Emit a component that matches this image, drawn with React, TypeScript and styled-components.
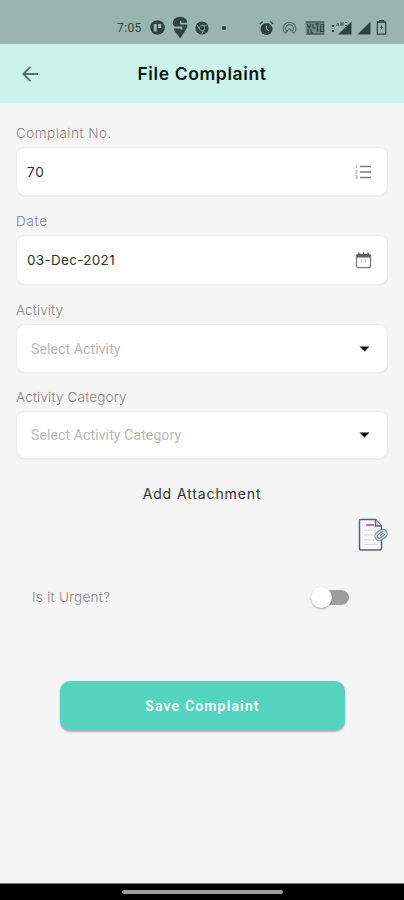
import React, { useState } from "react";
import styled, { createGlobalStyle } from "styled-components";

const GlobalStyle = createGlobalStyle`
  * { box-sizing: border-box; }
  body { margin: 0; background: #f5f5f5; }
  button { border: 0; padding: 0; background: none; font: inherit; color: inherit; }
`;

const Screen = styled.div`
  display: flex;
  flex-direction: column;
  width: 404px;
  height: 900px;
  overflow: hidden;
  background: #f5f5f5;
  font-family: Inter, "Open Sans", sans-serif;
`;

const StatusBar = styled.div`
  display: flex;
  align-items: center;
  flex: none;
  height: 44px;
  padding: 11px 17px 0 117px;
  background: #98b5ae;
  color: #30443f;
  svg { display: block; flex: none; }
`;

const Clock = styled.span`
  width: 33px;
  font: 400 12px/16px Roboto, sans-serif;
  letter-spacing: 0.4px;
`;

const StatusIcons = styled.div<{ $gap: number }>`
  display: flex;
  align-items: center;
  gap: ${(p) => p.$gap}px;
`;

const Spacer = styled.div`
  flex: 1;
`;

const Header = styled.header`
  display: grid;
  grid-template-columns: 60px 1fr 60px;
  align-items: center;
  flex: none;
  height: 59px;
  background: #cbf3e9;
`;

const BackButton = styled.button`
  display: flex;
  justify-content: center;
  height: 18px;
`;

const Title = styled.h1`
  margin: 0;
  font-size: 17.5px;
  line-height: 22px;
  font-weight: 600;
  letter-spacing: 0.62px;
  text-align: center;
  color: #0c1715;
  white-space: nowrap;
`;

const Form = styled.main`
  display: flex;
  flex-direction: column;
  flex: 1;
  padding: 20px 16px 0;
`;

const Field = styled.div<{ $height: number; $gap: number }>`
  display: flex;
  flex-direction: column;
  flex: none;
  height: ${(p) => p.$height}px;
  margin-bottom: ${(p) => p.$gap}px;
`;

const Label = styled.label<{ $spacing: number }>`
  height: 24px;
  font-size: 13.5px;
  line-height: 20px;
  font-weight: 300;
  letter-spacing: ${(p) => p.$spacing}px;
  color: #858585;
`;

const Box = styled.div<{ $inset: number }>`
  display: flex;
  align-items: center;
  justify-content: space-between;
  flex: 1;
  padding: 0 15px 0 ${(p) => p.$inset}px;
  border: 1px solid #ececec;
  border-radius: 9px;
  background: #fff;
  box-shadow: 0 1px 1px #ededed;
`;

const Value = styled.span<{ $spacing: number }>`
  font-size: 13.5px;
  line-height: 18px;
  letter-spacing: ${(p) => p.$spacing}px;
  color: #303030;
`;

const Placeholder = styled.span`
  font: 400 14px/18px Roboto, sans-serif;
  letter-spacing: 0.12px;
  color: #b9b9b9;
`;

const AttachmentTitle = styled.h2`
  margin: 0;
  font-size: 14px;
  line-height: 20px;
  font-weight: 400;
  letter-spacing: 0.88px;
  text-align: center;
  color: #303030;
`;

const AttachmentButton = styled.button`
  align-self: flex-end;
  width: 30px;
  height: 34px;
  margin-top: 14px;
  svg { display: block; }
`;

const UrgentRow = styled.div`
  display: flex;
  align-items: center;
  justify-content: space-between;
  height: 24px;
  margin-top: 33px;
  padding: 0 38px 0 16px;
`;

const UrgentLabel = styled.span`
  font-size: 13.5px;
  font-weight: 300;
  letter-spacing: 0.28px;
  color: #858585;
`;

const Toggle = styled.button<{ $on: boolean }>`
  display: flex;
  align-items: center;
  justify-content: ${(p) => (p.$on ? "flex-end" : "flex-start")};
  width: 34px;
  height: 15px;
  margin-right: 1px;
  border-radius: 8px;
  background: ${(p) => (p.$on ? "#9adfd0" : "#9e9e9e")};
`;

const Thumb = styled.span`
  width: 21px;
  height: 21px;
  flex: none;
  margin-left: -4px;
  border-radius: 50%;
  background: #fff;
  box-shadow: 0 1px 2px rgba(0, 0, 0, 0.35);
`;

const SaveButton = styled.button`
  height: 49px;
  width: 285px;
  margin: 72px 0 0 44px;
  border-radius: 10px;
  background: #54d3be;
  box-shadow: 0 2px 2px rgba(60, 75, 85, 0.42);
  color: #f3fffc;
  font: 600 14px/20px Roboto, sans-serif;
  letter-spacing: 1.15px;
`;

const NavigationBar = styled.footer`
  display: flex;
  align-items: center;
  justify-content: center;
  flex: none;
  height: 17px;
  border-top: 1px solid #777;
  background: #000;
`;

const NavigationHandle = styled.div`
  width: 161px;
  height: 4px;
  border-radius: 2px;
  background: #9b9b9b;
`;

const TrelloIcon = () => (
  <svg width="15" height="15" viewBox="0 0 15 15">
    <circle cx="7.5" cy="7.5" r="7.3" fill="#30443f" />
    <rect x="3.8" y="4" width="3" height="7.4" rx=".6" fill="#98b5ae" />
    <rect x="8" y="4" width="3.3" height="4" rx=".6" fill="#98b5ae" />
  </svg>
);

const SwiggyIcon = () => (
  <svg width="16" height="23" viewBox="0 0 16 23">
    <path d="M8 22.500C6 19 3.700 16.500 2 14c-.5-1 .2-1.600 1.200-1.600h5v1h2.200v-2c0-.6-.4-.9-1-.9H3C.9 9.800.2 7.600 1 5.400 2 2.300 4.700.8 8 .8c4.200 0 7 2.500 7.300 6H9.200V4.800H8v2.800c0 .6.3.9 1 .9h5.700c.7 0 .9.400.7 1.200C14.400 14 11 18 8 22.500Z" fill="#30443f" />
  </svg>
);

const ChromeIcon = () => (
  <svg width="14" height="14" viewBox="0 0 14 14">
    <circle cx="7" cy="7" r="6.6" fill="#30443f" />
    <g fill="none" stroke="#7f9a94" strokeWidth="1">
      <circle cx="7" cy="7" r="2.7" />
      <path d="M7 4.300h5.300M4.600 8.400 2 3.900M9.400 8.400l-2.700 4.500" />
    </g>
  </svg>
);

const AlarmIcon = () => (
  <svg width="15" height="16" viewBox="0 0 15 16">
    <circle cx="7.5" cy="9" r="6" fill="#30443f" />
    <path d="m.8 4 3-2.600M14.200 4l-3-2.600" stroke="#30443f" strokeWidth="1.3" />
    <path d="M7.500 5.800V9.200l2.300 1.400" fill="none" stroke="#98b5ae" strokeWidth="1" />
  </svg>
);

const HotspotIcon = () => (
  <svg width="15" height="14" viewBox="0 0 15 14" fill="none" stroke="#506963" strokeWidth="1.1">
    <path d="M3.300 12.300a6.300 6.300 0 1 1 8.400 0M4.800 10.300a3.900 3.900 0 1 1 5.400 0" />
    <path d="m7.500 7.500-4.200 4.800M7.500 7.500l4.200 4.800" />
  </svg>
);

const VolteIcon = () => (
  <svg width="20" height="14" viewBox="0 0 20 14">
    <path d="M.5.500h19v13H.5z" fill="#6f8983" />
    <path d="M1 1h18M1 13h18M2 3l2 4 2-4M8 3v4h3M3 8v4M6 8v4h2M10 3h4M12.500 3v8M15.500 3.500h3v7h-3v-7" fill="none" stroke="#30443f" strokeWidth="1.2" />
  </svg>
);

const SignalIcon = ({ network = false }: { network?: boolean }) => (
  <svg width={network ? 21 : 14} height="14" viewBox={network ? "0 0 21 14" : "0 0 14 14"}>
    <path d={network ? "M20.500.500v13H7Z" : "M13.500.500v13H.5Z"} fill="#30443f" />
    {network && (
      <g fill="none" stroke="#30443f">
        <path d="M1 5h2M1 10h2" strokeWidth="2" />
        <path d="m5.500 5 1.500-3 1 3M10 1v4M10 3h2M12 1v4M14 1.500h2M14 4.500h2" strokeWidth=".8" />
      </g>
    )}
  </svg>
);

const BatteryIcon = () => (
  <svg width="11" height="15" viewBox="0 0 11 15">
    <path d="M3.600 1.800V.7h3.800v1.100h2.300v12.300H1.300V1.800Z" fill="none" stroke="#30443f" strokeWidth="1.2" />
    <path d="M2 2h7" stroke="#30443f" strokeWidth="1.5" />
    <path d="M5.500 5.500v4M4.500 7.500h2" stroke="#30443f" strokeWidth="1.1" />
  </svg>
);

const BackIcon = () => (
  <svg width="18" height="18" viewBox="0 0 18 18" fill="none" stroke="#527269" strokeWidth="1.9">
    <path d="M17 9H2.500M9.500 1.800 2.300 9l7.200 7.200" />
  </svg>
);

const NumberListIcon = () => (
  <svg width="17" height="16" viewBox="0 0 17 16" fill="none">
    <path d="M5 2.500h11M5 8h11M5 13.500h11" stroke="#7d7d7d" strokeWidth="1.4" />
    <path d="M.7 1.500h1v3M.5 6.700h1.800L.6 9.200h1.800M.5 11.700h1.700v2.900H.5M1 13.100h1.200" stroke="#a5a5a5" strokeWidth=".8" />
  </svg>
);

const CalendarIcon = () => (
  <svg width="17" height="18" viewBox="0 0 17 18" fill="none">
    <rect x="1.500" y="3.500" width="14" height="13.200" rx="2" stroke="#7d7d7d" strokeWidth="1.3" />
    <path d="M1.500 6V4.500q0-1.500 1.500-1.500h11Q15.500 3 15.500 4.500v2h-14Z" fill="#606060" />
    <path d="M4 1.500v3M8.500 1.500v3M13 1.500v3" stroke="#606060" strokeWidth="1.3" />
    <path d="M6.500 8.500v3M10.500 8.500v3" stroke="#c9c9c9" strokeWidth="1" />
  </svg>
);

const CaretIcon = () => (
  <svg width="17" height="8" viewBox="0 0 17 8">
    <path d="M4.500 1.500h10L9.500 6.500Z" fill="#080808" />
  </svg>
);

const DocumentIcon = () => (
  <svg width="30" height="34" viewBox="0 0 30 34" fill="none">
    <path d="M3 1.500h14.500L23.500 8v22.500q0 1.500-1.500 1.500H3q-1.500 0-1.500-1.500V3Q1.500 1.500 3 1.500Z" fill="#fafaff" stroke="#5b5d78" strokeWidth="1.5" />
    <path d="M17.500 1.500V8h6" fill="#dfe1ef" stroke="#5b5d78" strokeWidth="1.3" />
    <path d="M8 7h8" stroke="#e34d66" strokeWidth="1.7" />
    <path d="M6 12.200h12M6 17h10M6 21.800h10M6 26.600h14" stroke="#d4d6df" strokeWidth="1" />
    <g transform="rotate(-38 23 17)">
      <rect x="16.500" y="12.500" width="13" height="9" rx="4.500" fill="#d8e0e3" stroke="#7b8993" strokeWidth="1.1" />
      <path d="M27 15h-6q-2 0-2 2t2 2h5.500M26 17h-4" stroke="#7b8993" strokeWidth="1.1" />
    </g>
  </svg>
);

export default function App() {
  const [urgent, setUrgent] = useState(false);

  return (
    <Screen>
      <GlobalStyle />
      <StatusBar>
        <Clock>7:05</Clock>
        <StatusIcons $gap={7}>
          <TrelloIcon />
          <SwiggyIcon />
          <ChromeIcon />
          <svg width="14" height="6" viewBox="0 0 14 6">
            <circle cx="8" cy="3" r="2.1" fill="#30443f" />
          </svg>
        </StatusIcons>
        <Spacer />
        <StatusIcons $gap={6}>
          <StatusIcons $gap={8}>
            <AlarmIcon />
            <HotspotIcon />
            <VolteIcon />
          </StatusIcons>
          <StatusIcons $gap={5}>
            <SignalIcon network />
            <SignalIcon />
            <BatteryIcon />
          </StatusIcons>
        </StatusIcons>
      </StatusBar>
      <Header>
        <BackButton aria-label="Back"><BackIcon /></BackButton>
        <Title>File Complaint</Title>
      </Header>
      <Form>
        <Field $height={73} $gap={15}>
          <Label $spacing={0.5}>Complaint No.</Label>
          <Box $inset={10}><Value $spacing={0.9}>70</Value><NumberListIcon /></Box>
        </Field>
        <Field $height={74} $gap={15}>
          <Label $spacing={0.7}>Date</Label>
          <Box $inset={10}><Value $spacing={0.3}>03-Dec-2021</Value><CalendarIcon /></Box>
        </Field>
        <Field $height={73} $gap={14}>
          <Label $spacing={0.1}>Activity</Label>
          <Box $inset={14}><Placeholder>Select Activity</Placeholder><CaretIcon /></Box>
        </Field>
        <Field $height={72} $gap={25}>
          <Label $spacing={0.17}>Activity Category</Label>
          <Box $inset={14}><Placeholder>Select Activity Category</Placeholder><CaretIcon /></Box>
        </Field>
        <AttachmentTitle>Add Attachment</AttachmentTitle>
        <AttachmentButton aria-label="Add attachment"><DocumentIcon /></AttachmentButton>
        <UrgentRow>
          <UrgentLabel>Is it Urgent?</UrgentLabel>
          <Toggle $on={urgent} role="switch" aria-checked={urgent} aria-label="Is it Urgent?" onClick={() => setUrgent(!urgent)}>
            <Thumb />
          </Toggle>
        </UrgentRow>
        <SaveButton>Save Complaint</SaveButton>
      </Form>
      <NavigationBar><NavigationHandle /></NavigationBar>
    </Screen>
  );
}
